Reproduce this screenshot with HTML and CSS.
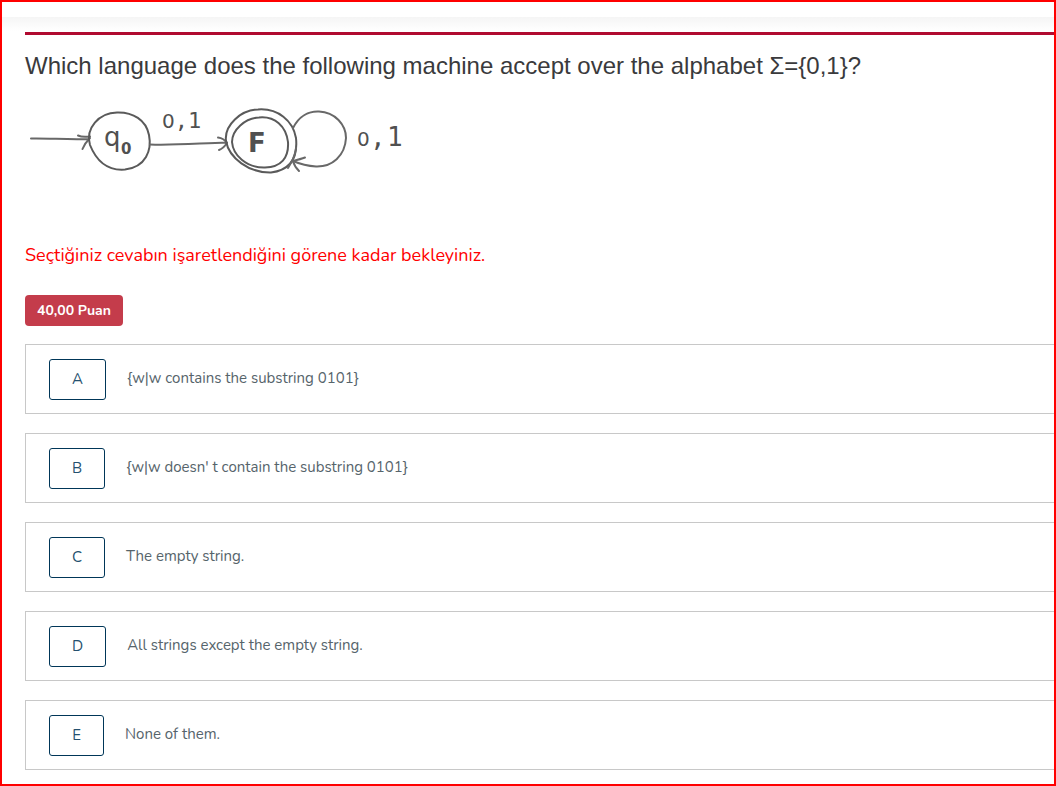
FILE: index.html
```html
<!DOCTYPE html>
<html lang="en">
<head>
<meta charset="utf-8">
<title>Question</title>
<link rel="stylesheet" href="styles.css">
</head>
<body>
<div class="topbar"></div>
<main class="question">
  <h1 class="question-title">Which language does the following machine accept over the alphabet Σ={0,1}?</h1>
  <svg class="machine" width="410" height="90" viewBox="25 95 410 90" role="img" aria-label="State machine with states q0 and F">
    <g class="stroke">
      <path d="M31 138.500C49 138 68 140 89 139M78 135.500C82 137.500 86 137 90 136.500M90 138C87 141 84 145 82.500 149"/>
      <path class="ring" d="M117 112.500C133 112 146 120 149 135C152 150 146 167 125 169.500C107 171 96 160 90 145C85 128 99 113 117 112.500Z"/>
      <path d="M150 144.500C176 145.500 202 143 227 142.500M218 137.500C222 138 225 140 227 143C225 146 222 149 219 150"/>
      <path class="ring" d="M258 109.500C278 108 293 121 296 138C298 158 290 170 271 172.500C249 173 229 158 226 141C224 125 241 110 258 109.500Z"/>
      <path class="ring" d="M259 117.500C275 116 286 126 288 142C289 158 281 167 265 167.500C246 168 233 155 232 142C232 130 245 118 259 117.500Z"/>
      <path d="M293 128C299 116 309 111 319 111.500C335 112 346 125 346 138C345 156 332 167 316 166.500C308 166 300 164 293 161"/>
      <path d="M305 157.500C301 159 297 160 293 161C294 165 296 168 299 171M296 148C295 156 292 162 288 168"/>
    </g>
    <g class="labels">
      <text class="state" x="104" y="146">q</text>
      <text class="state-index" x="121" y="154">0</text>
      <text class="state accept" x="248" y="152">F</text>
      <text class="edge" y="128"><tspan class="zero" x="162">0</tspan><tspan>,</tspan><tspan>1</tspan></text>
      <text class="edge loop" y="146"><tspan class="zero" x="357">0</tspan><tspan x="370">,</tspan><tspan x="387">1</tspan></text>
    </g>
  </svg>
  <p class="notice">Seçtiğiniz cevabın işaretlendiğini görene kadar bekleyiniz.</p>
  <span class="points">40,00 Puan</span>
  <ul class="answers">
    <li class="answer"><button class="choice" id="a" aria-labelledby="a ta">A</button><span id="ta">{w|w contains the substring 0101}</span></li>
    <li class="answer"><button class="choice" id="b" aria-labelledby="b tb">B</button><span id="tb">{w|w doesn' t contain the substring 0101}</span></li>
    <li class="answer"><button class="choice" id="c" aria-labelledby="c tc">C</button><span id="tc">The empty string.</span></li>
    <li class="answer"><button class="choice" id="d" aria-labelledby="d td">D</button><span id="td">All strings except the empty string.</span></li>
    <li class="answer"><button class="choice" id="e" aria-labelledby="e te">E</button><span id="te">None of them.</span></li>
  </ul>
</main>
</body>
</html>
```
FILE: styles.css
```css
* { box-sizing: border-box; }
body {
  margin: 0;
  min-height: 100vh;
  border: 2px solid #ff0000;
  background: #fff;
  color: #56646b;
  font-family: Nunito, Lato, "Noto Sans", sans-serif;
  font-size: 15px;
}
.topbar {
  height: 30px;
  background: linear-gradient(#fff 15px, #f5f5f5 15px, #fdfdfd 26px, #fff);
}
.question {
  display: flex;
  flex-direction: column;
  align-items: flex-start;
  margin-left: 23px;
  border-top: 3px solid #b00a30;
}
.question-title {
  margin: 16px 0 0;
  font: 400 24px/30px "Liberation Sans", Arial, sans-serif;
  color: #3a3a3c;
}
.machine { margin-top: 14px; }
.stroke { fill: none; stroke: #686868; stroke-width: 2; stroke-linecap: round; }
.ring { stroke: #5a5a5a; }
.labels { fill: #505050; font-family: "DejaVu Sans Mono", monospace; }
.state { font-family: "DejaVu Sans", sans-serif; font-size: 26px; }
.state-index { font-family: "DejaVu Sans", sans-serif; font-size: 15px; font-weight: 700; }
.accept { font-weight: 700; }
.edge { font-size: 22px; }
.loop { font-size: 26px; }
.zero { font-family: "DejaVu Sans", sans-serif; font-size: 20px; }
.notice {
  margin: 58px 0 0;
  font-size: 18px;
  line-height: 24px;
  color: #ff0000;
}
.points {
  margin-top: 28px;
  padding: 0 12px;
  border-radius: 4px;
  background: #c43c4b;
  color: #fff;
  font-size: 14px;
  font-weight: 700;
  line-height: 31px;
}
.answers {
  display: grid;
  gap: 19px;
  width: 100%;
  margin: 18px 0 14px;
  padding: 0;
  list-style: none;
}
.answer {
  display: flex;
  align-items: flex-start;
  gap: 21px;
  padding: 14px 23px 13px;
  border: 1px solid #c8c8c8;
  border-right: 0;
  line-height: 39px;
}
.choice {
  min-width: 55px;
  height: 41px;
  padding: 0 22px 2px;
  border: 1px solid #003658;
  border-radius: 3px;
  background: #fff;
  color: #24506e;
  font: inherit;
  line-height: 24px;
}
```
